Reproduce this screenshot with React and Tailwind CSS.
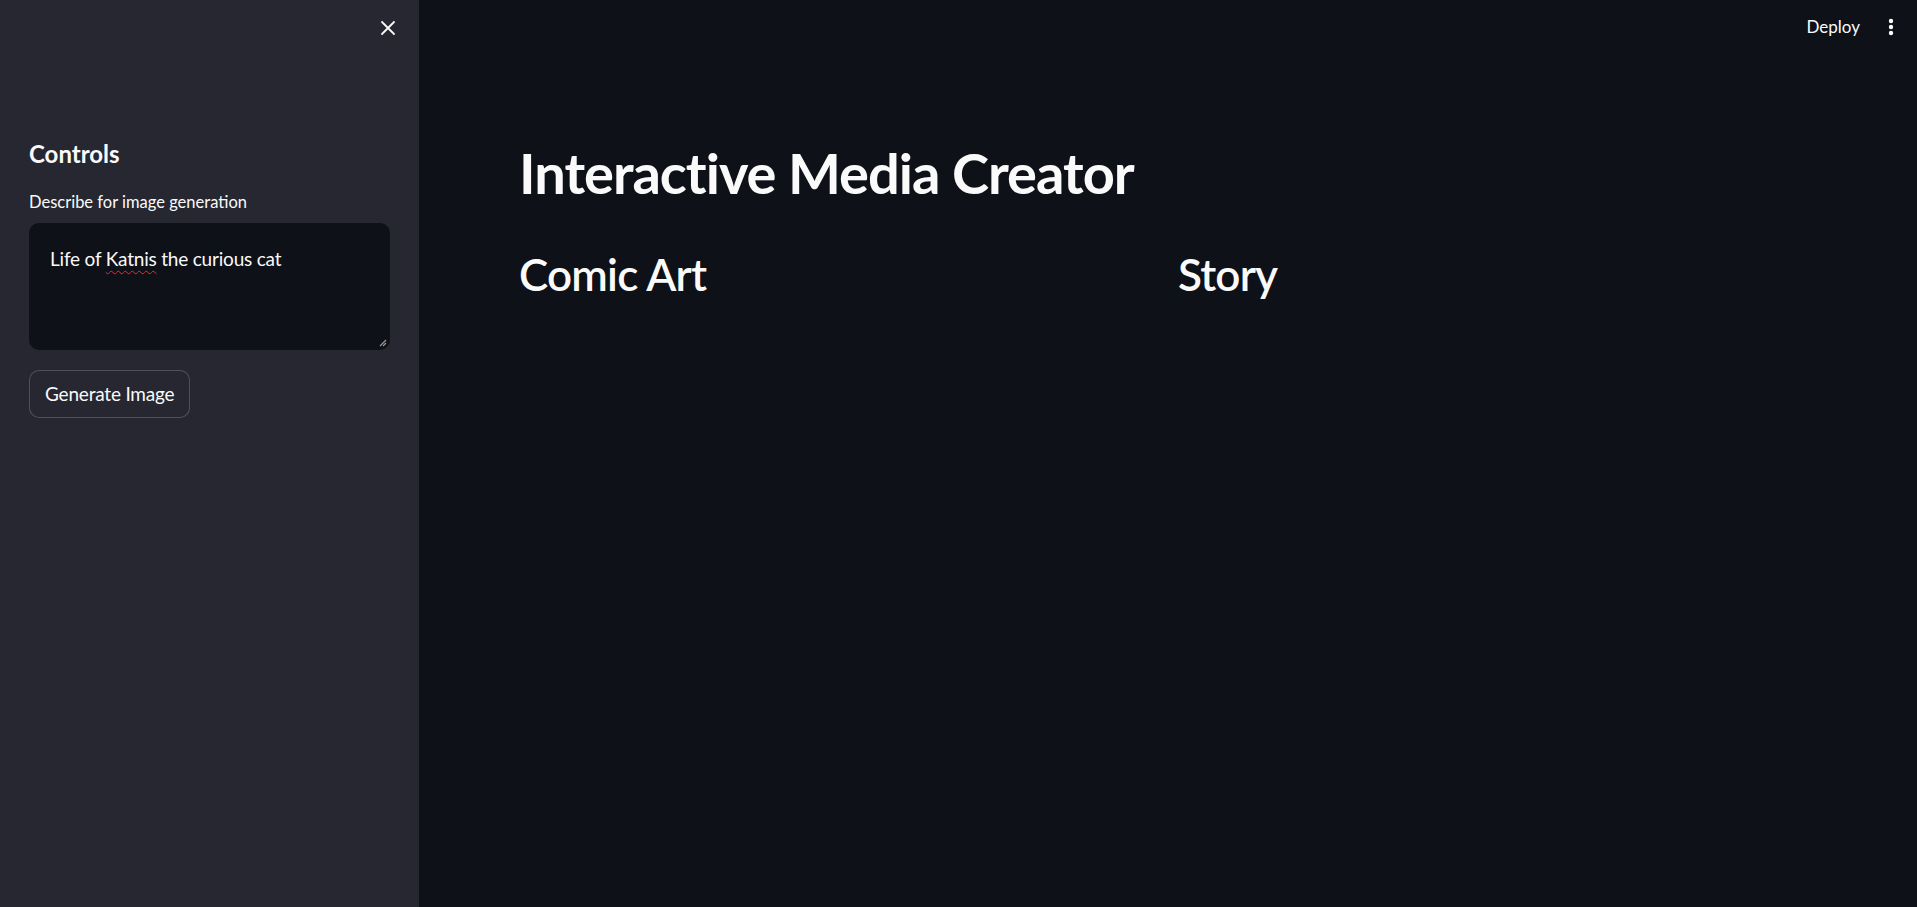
import React from "react";

function CloseIcon() {
  return (
    <svg width="16" height="16" viewBox="0 0 16 16" fill="none" stroke="#fafafa" strokeWidth="1.8" strokeLinecap="round">
      <path d="M2 2L14 14M14 2L2 14" />
    </svg>
  );
}

function Sidebar() {
  return (
    <aside className="w-[419px] shrink-0 bg-[#262730] min-h-screen flex flex-col px-[29px]">
      <div className="h-[56px] flex items-center justify-end">
        <button className="w-8 h-8 flex items-center justify-center mr-[-14px]">
          <CloseIcon />
        </button>
      </div>
      <h3 className="mt-[84px] text-[24px] font-bold leading-[1.2] text-[#fafafa]">Controls</h3>
      <label className="mt-[22px] text-[16.5px] leading-[1.4] text-[#fafafa]">Describe for image generation</label>
      <div className="relative mt-[9px] h-[127px] rounded-[10px] bg-[#0e1117] px-[21px] pt-[22px] text-[19px] tracking-[-0.2px] leading-[1.5] text-[#fafafa]">
        Life of{" "}
        <span className="underline decoration-wavy decoration-[#e03131] decoration-[1px] underline-offset-[4px]">Katnis</span>{" "}
        the curious cat
        <svg className="absolute right-[3px] bottom-[3px]" width="9" height="9" viewBox="0 0 9 9" stroke="#9a9a9a" strokeWidth="1.2">
          <path d="M8 2L2 8M8 5L5 8" />
        </svg>
      </div>
      <div className="mt-[20px]">
        <button className="h-[48px] px-[15px] rounded-[10px] border border-[#fafafa]/20 bg-[#262730] text-[19px] tracking-[-0.2px] text-[#fafafa]">
          Generate Image
        </button>
      </div>
    </aside>
  );
}

export default function App() {
  return (
    <div className="flex min-h-screen bg-[#0e1117] text-[#fafafa]" style={{ fontFamily: "Lato, 'Noto Sans', sans-serif" }}>
      <Sidebar />
      <main className="flex-1 flex flex-col">
        <header className="h-[54px] flex items-center justify-end gap-[28px] pr-[23px]">
          <span className="text-[17px] text-[#fafafa]">Deploy</span>
          <svg width="6" height="18" viewBox="0 0 6 18" fill="#fafafa">
            <circle cx="3" cy="3" r="2.2" />
            <circle cx="3" cy="9" r="2.2" />
            <circle cx="3" cy="15" r="2.2" />
          </svg>
        </header>
        <div className="px-[100px] pt-[85px]">
          <h1 className="text-[56px] font-bold leading-[1.2] tracking-[-1px]">Interactive Media Creator</h1>
          <div className="mt-[42px] grid grid-cols-2 gap-[20px]">
            <h2 className="text-[44px] font-semibold leading-[1.2] tracking-[-0.8px]">Comic Art</h2>
            <h2 className="text-[44px] font-semibold leading-[1.2] tracking-[-0.8px]">Story</h2>
          </div>
        </div>
      </main>
    </div>
  );
}
